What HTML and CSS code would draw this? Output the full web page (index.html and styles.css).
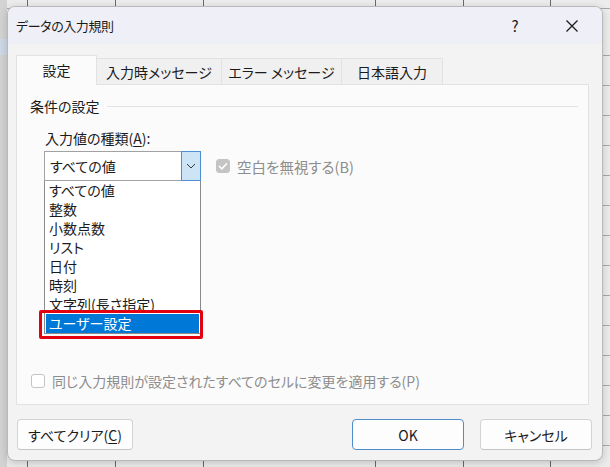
FILE: index.html
```html
<!DOCTYPE html>
<html lang="ja">
<head>
<meta charset="utf-8">
<title>データの入力規則</title>
<link rel="stylesheet" href="styles.css">
</head>
<body>
<div class="dialog">
  <div class="titlebar">
    <span class="title">データの入力規則</span>
    <span class="help">?</span>
    <span class="close"><svg width="14" height="14" viewBox="0 0 14 14"><path d="M1.5 1.5L12.5 12.5M12.5 1.5L1.5 12.5" stroke="#1b1b1b" stroke-width="1.3" fill="none"/></svg></span>
  </div>
  <div class="tabs">
    <div class="tab active">設定</div>
    <div class="tab t2">入力時メッセージ</div>
    <div class="tab t3">エラー メッセージ</div>
    <div class="tab t4">日本語入力</div>
  </div>
  <div class="panel">
    <div class="group-title"><span>条件の設定</span><span class="rule"></span></div>
    <div class="label">入力値の種類(<u>A</u>):</div>
    <div class="row">
      <div class="combo">
        <span class="combo-text">すべての値</span>
        <span class="combo-btn"><svg width="10" height="6" viewBox="0 0 10 6"><path d="M1 1L5 5L9 1" stroke="#3a3a3a" stroke-width="1" fill="none"/></svg></span>
      </div>
      <div class="check disabled"><span class="box checked"><svg width="10" height="8" viewBox="0 0 10 8"><path d="M1 4L3.8 6.8L9 1.2" stroke="#ffffff" stroke-width="1.5" fill="none"/></svg></span><span>空白を無視する(B)</span></div>
    </div>
    <ul class="list">
      <li>すべての値</li>
      <li>整数</li>
      <li>小数点数</li>
      <li>リスト</li>
      <li>日付</li>
      <li>時刻</li>
      <li>文字列(長さ指定)</li>
      <li class="sel">ユーザー設定</li>
    </ul>
    <div class="highlight"></div>
    <div class="check disabled apply"><span class="box"></span><span>同じ入力規則が設定されたすべてのセルに変更を適用する(P)</span></div>
  </div>
  <div class="buttons">
    <button class="btn clear">すべてクリア(<u>C</u>)</button>
    <span class="spacer"></span>
    <button class="btn ok">OK</button>
    <button class="btn cancel">キャンセル</button>
  </div>
</div>
</body>
</html>
```

FILE: styles.css
```css
html, body {
  margin: 0;
  padding: 0;
}
body {
  width: 610px;
  height: 467px;
  overflow: hidden;
  font-family: "Noto Sans CJK JP", "Noto Sans", sans-serif;
  font-feature-settings: "palt";
  color: #1b1b1b;
  background-color: #ececec;
  background-image:
    linear-gradient(#cfd9e6, #cfd9e6),
    linear-gradient(#d3d3d3, #d3d3d3),
    linear-gradient(#6a6a6a, #6a6a6a),
    linear-gradient(#6a6a6a, #6a6a6a),
    linear-gradient(#6a6a6a, #6a6a6a),
    linear-gradient(#6a6a6a, #6a6a6a),
    linear-gradient(#6a6a6a, #6a6a6a),
    linear-gradient(#6a6a6a, #6a6a6a),
    repeating-linear-gradient(to bottom, transparent 0 29px, #a8a8a8 29px 30px);
  background-size:
    7px 16px,
    7px 100%,
    1px 100%, 1px 100%, 1px 100%, 1px 100%, 1px 100%, 1px 100%,
    100% 100%;
  background-position:
    0 39px,
    0 0,
    27px 0, 115px 0, 203px 0, 375px 0, 463px 0, 550px 0,
    0 26px;
  background-repeat: no-repeat, no-repeat, no-repeat, no-repeat, no-repeat, no-repeat, no-repeat, no-repeat, repeat-y;
}
.dialog {
  margin: 6px 0 0 7px;
  width: 594px;
  height: 453px;
  border: 1px solid #b9b9b9;
  border-radius: 8px;
  background: #f3f3f3;
  box-shadow: 0 2px 8px rgba(0,0,0,0.18);
  overflow: hidden;
  display: flex;
  flex-direction: column;
}
.titlebar {
  height: 37px;
  flex: none;
  display: flex;
  align-items: center;
  padding-left: 8px;
  background: #eff0f7;
}
.title {
  font-size: 13px;
  letter-spacing: -0.4px;
  flex: 1;
}
.help {
  font-size: 15px;
  width: 14px;
  text-align: center;
  margin-right: 43px;
}
.close {
  display: flex;
  width: 14px;
  margin-right: 23px;
}
.tabs {
  margin: 11px 0 0 8px;
  display: flex;
  align-items: flex-end;
  height: 29px;
  position: relative;
  z-index: 1;
}
.tab {
  height: 26px;
  box-sizing: border-box;
  border: 1px solid #e2e2e2;
  border-bottom: none;
  border-left: none;
  background: #f0f0f0;
  font-size: 14px;
  display: flex;
  align-items: center;
  justify-content: center;
  padding-top: 1px;
}
.tab.active {
  width: 81px;
  height: 30px;
  margin-bottom: -1px;
  background: #fbfbfb;
  border-left: 1px solid #e2e2e2;
  padding-top: 0;
  padding-bottom: 1px;
}
.t2 { width: 125px; }
.t3 { width: 120px; }
.t4 { width: 101px; }
.panel {
  margin-left: 8px;
  width: 573px;
  height: 321px;
  box-sizing: border-box;
  border: 1px solid #e2e2e2;
  background: #fbfbfb;
  position: relative;
  flex: none;
}
.group-title {
  display: flex;
  align-items: center;
  height: 20px;
  margin: 11px 10px 0 13px;
  font-size: 14px;
}
.rule {
  flex: 1;
  height: 1px;
  background: #e3e3e3;
  margin-left: 7px;
}
.label {
  font-size: 14px;
  height: 20px;
  line-height: 20px;
  margin: 12px 0 0 28px;
}
.label u, .clear u {
  text-underline-offset: 2px;
}
.row {
  display: flex;
  align-items: center;
  margin: 3px 0 0 27px;
  height: 30px;
}
.combo {
  width: 157px;
  height: 30px;
  box-sizing: border-box;
  border: 1px solid #a2a2a2;
  background: #ffffff;
  display: flex;
  align-items: stretch;
}
.combo-text {
  flex: 1;
  font-size: 14px;
  display: flex;
  align-items: center;
  padding-left: 5px;
}
.combo-btn {
  width: 20px;
  box-sizing: border-box;
  margin: -1px -1px -1px 0;
  border: 1px solid #4e8fd3;
  background: #cde3f6;
  display: flex;
  align-items: center;
  justify-content: center;
}
.check {
  display: flex;
  align-items: center;
  font-size: 14px;
}
.check.disabled {
  color: #8d8d8d;
}
.row .check {
  margin-left: 15px;
  font-size: 14.5px;
}
.box {
  width: 14px;
  height: 14px;
  box-sizing: border-box;
  border-radius: 3px;
  border: 1px solid #c4c4c4;
  background: #ffffff;
  margin-right: 7px;
  display: flex;
  align-items: center;
  justify-content: center;
}
.box.checked {
  background: #c4c4c4;
  border-color: #c4c4c4;
}
.list {
  list-style: none;
  margin: 0 0 0 27px;
  padding: 0;
  width: 157px;
  box-sizing: border-box;
  border: 1px solid #8a8a8a;
  border-top: none;
  background: #ffffff;
}
.list li {
  height: 19px;
  line-height: 19px;
  font-size: 14px;
  padding-left: 3px;
  margin: 0 1px;
}
.list li.sel {
  background: #0078d7;
  color: #ffffff;
}
.highlight {
  position: absolute;
  left: 22px;
  top: 225px;
  width: 164px;
  height: 29px;
  box-sizing: border-box;
  border: 3px solid #e3000f;
  border-radius: 2px;
}
.apply {
  margin: 39px 0 0 14px;
  height: 16px;
}
.buttons {
  display: flex;
  margin: 14px 10px 0 9px;
  gap: 16px;
}
.spacer {
  flex: 1;
}
.btn {
  height: 31px;
  font-family: inherit;
  font-feature-settings: "palt";
  font-size: 14px;
  color: #1b1b1b;
  background: #fdfdfd;
  border: 1px solid #d3d3d3;
  border-bottom-color: #c4c4c4;
  border-radius: 4px;
  padding: 0;
}
.clear { width: 116px; }
.ok {
  width: 112px;
  border: 1px solid #4f8ccc;
}
.cancel { width: 112px; }
```
